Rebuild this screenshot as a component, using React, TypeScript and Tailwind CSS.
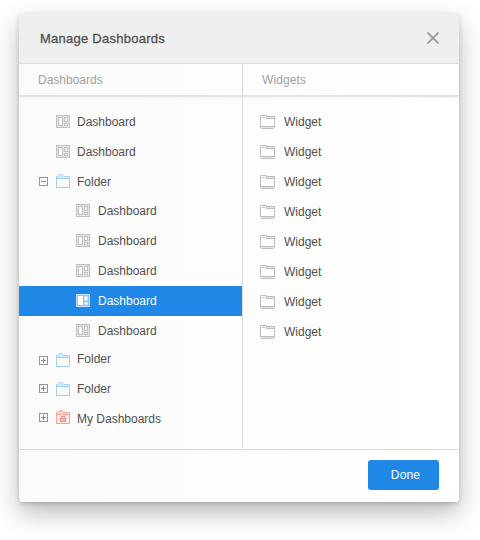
import React from "react";

type Kind = "dashboard" | "folder" | "locked";

function DashboardIcon({ active }: { active?: boolean }) {
  const line = active ? "#c9e3fb" : "#c0c0c0";
  const back = active ? "#8fc5f5" : "#e6e6e6";
  const pane = active ? "#ffffff" : "#fcfcfc";
  return (
    <svg width="14" height="13" viewBox="0 0 14 13" shapeRendering="crispEdges">
      <rect x=".5" y=".5" width="13" height="12" fill={back} stroke={line} />
      <rect x="2.5" y="2.5" width="4" height="8" fill={pane} stroke={active ? "#ffffff" : line} />
      <rect x="8.5" y="2.5" width="3" height="4" fill={pane} stroke={line} />
      <rect x="8.5" y="8.5" width="3" height="2" fill={pane} stroke={line} />
    </svg>
  );
}

function FolderIcon({ locked }: { locked?: boolean }) {
  const line = locked ? "#f0a49c" : "#a4cff3";
  const tint = locked ? "#fad6d2" : "#d3e8fa";
  return (
    <svg width="14" height="14" viewBox="0 0 14 14">
      <path d="M.5 4.5V2.5L2.5 1.5 3.5.5H6L8 2.5H13.5V4.5Z" fill={tint} stroke={line} />
      <rect x=".5" y="4.5" width="13" height="9" fill={locked ? "#fbe9e7" : "#fafbfc"} stroke={line} />
      {locked && (
        <g shapeRendering="crispEdges">
          <rect x="5.5" y="6.5" width="3" height="3" fill="none" stroke="#eb9289" />
          <rect x="4.5" y="8.5" width="5" height="3" fill="#f5bdb7" stroke="#eb9289" />
        </g>
      )}
    </svg>
  );
}

function WidgetIcon() {
  return (
    <svg width="15" height="14" viewBox="0 0 15 14">
      <path d="M.5 .5H6.5V1.5H14.5V12.5L13.5 13.5H1.5L.5 12.5Z" fill="#fff" stroke="#bdbdbd" />
      <path d="M7 2.5H14M1 12.5H14" stroke="#e4e4e4" />
      <path d="M6.5 1V3.5H14M1 11.5H14" fill="none" stroke="#bdbdbd" />
      <path d="M2 2.5H5" stroke="#9cc8ee" />
    </svg>
  );
}

function Toggle({ open }: { open?: boolean }) {
  return (
    <svg width="9" height="9" viewBox="0 0 9 9" shapeRendering="crispEdges">
      <rect x=".5" y=".5" width="8" height="8" fill="none" stroke="#959595" />
      <path d={open ? "M2 4.5H7" : "M2 4.5H7M4.5 2V7"} stroke="#8a8a8a" />
    </svg>
  );
}

interface Item {
  label: string;
  kind: Kind;
  height: string;
  iconTop: string;
  toggleTop?: string;
  open?: boolean;
  child?: boolean;
  active?: boolean;
}

const dash: Item = { label: "Dashboard", kind: "dashboard", height: "h-[30px]", iconTop: "pt-2" };

const items: Item[] = [
  dash,
  dash,
  { label: "Folder", kind: "folder", height: "h-[29px]", iconTop: "pt-[7px]", toggleTop: "pt-[10px]", open: true },
  { ...dash, child: true },
  { ...dash, child: true },
  { ...dash, child: true },
  { ...dash, child: true, active: true },
  { ...dash, child: true, height: "h-7" },
  { label: "Folder", kind: "folder", height: "h-[30px]", iconTop: "pt-[9px]", toggleTop: "pt-3" },
  { label: "Folder", kind: "folder", height: "h-[30px]", iconTop: "pt-2", toggleTop: "pt-[10px]" },
  { label: "My Dashboards", kind: "locked", height: "h-[30px]", iconTop: "pt-[6px]", toggleTop: "pt-[9px]" },
];

function TreeRow({ item }: { item: Item }) {
  return (
    <li className={`flex items-start pl-5 ${item.height} ${item.active ? "bg-[#1f87e6] text-white" : ""}`}>
      <span className={`shrink-0 ${item.child ? "w-[37px]" : "w-[17px]"} ${item.toggleTop ?? ""}`}>
        {item.toggleTop && <span className="block [&>svg]:block"><Toggle open={item.open} /></span>}
      </span>
      <span className={`shrink-0 [&>svg]:block ${item.child ? "w-[22px]" : "w-[21px]"} ${item.iconTop}`}>
        {item.kind === "dashboard" ? <DashboardIcon active={item.active} /> : <FolderIcon locked={item.kind === "locked"} />}
      </span>
      <span className="leading-[30px]">{item.label}</span>
    </li>
  );
}

export default function App() {
  return (
    <div className="h-[540px] w-[480px] overflow-hidden bg-white pl-[19px] pt-[13px] font-['Liberation_Sans',Arial,sans-serif] text-xs text-[#505050]">
      <div className="flex h-[489px] w-[440px] flex-col rounded bg-[#fcfcfc] shadow-[0_11px_26px_rgba(0,0,0,0.27),0_2px_4px_rgba(0,0,0,0.16)]">
        <header className="flex h-[51px] items-center justify-between rounded-t border-b border-[#dcdcdc] bg-[#efefef] pl-[21px] pr-5">
          <h1 className="text-[13px] leading-none tracking-[0.25px] [-webkit-text-stroke:0.3px_#505050]">Manage Dashboards</h1>
          <svg width="12" height="12" viewBox="0 0 12 12" stroke="#999" strokeWidth="1.7">
            <path d="M.5 .5 11.5 11.5M11.5 .5 .5 11.5" />
          </svg>
        </header>
        <div className="flex min-h-0 flex-1 bg-gradient-to-r from-[#fbfbfb] to-white">
          <section className="w-[224px] border-r border-[#dcdcdc]">
            <h2 className="h-[33px] border-b-2 border-[#e3e3e3] pl-[19px] leading-[32px] text-[#a0a0a0] shadow-[0_1px_2px_rgba(0,0,0,0.05)]">Dashboards</h2>
            <ul className="pt-[10px]">
              {items.map((item, i) => <TreeRow key={i} item={item} />)}
            </ul>
          </section>
          <section className="flex-1">
            <h2 className="h-[33px] border-b-2 border-[#e3e3e3] pl-[19px] leading-[32px] tracking-[0.1px] text-[#a0a0a0] shadow-[0_1px_2px_rgba(0,0,0,0.05)]">Widgets</h2>
            <ul className="pt-[10px]">
              {Array.from({ length: 8 }, (_, i) => (
                <li key={i} className="flex h-[30px] items-center gap-[9px] pl-[17px]">
                  <WidgetIcon />
                  <span className="leading-[30px]">Widget</span>
                </li>
              ))}
            </ul>
          </section>
        </div>
        <footer className="flex h-[53px] items-start justify-end rounded-b border-t border-[#dcdcdc] bg-gradient-to-r from-[#fbfbfb] to-white pr-5 pt-[10px]">
          <button className="h-[30px] w-[71px] rounded-[3px] bg-[#1f87e6] pl-1 tracking-[0.15px] text-white">Done</button>
        </footer>
      </div>
    </div>
  );
}
